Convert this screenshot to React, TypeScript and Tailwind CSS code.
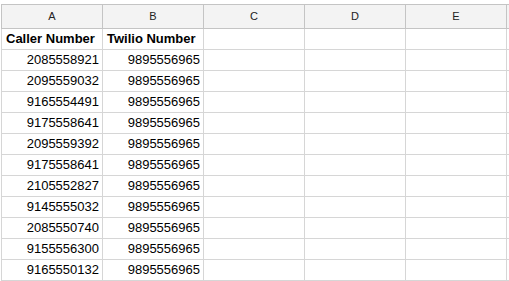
import React from "react";

const callers = [
  "2085558921",
  "2095559032",
  "9165554491",
  "9175558641",
  "2095559392",
  "9175558641",
  "2105552827",
  "9145555032",
  "2085550740",
  "9155556300",
  "9165550132",
];

const cols = ["A", "B", "C", "D", "E"];

export default function App() {
  const rows: string[][] = [
    ["Caller Number", "Twilio Number", "", "", ""],
    ...callers.map((c) => [c, "9895556965", "", "", ""]),
  ];
  return (
    <div
      className="w-[509px] h-[281px] overflow-hidden bg-white pt-[4px] pl-px"
      style={{ fontFamily: '"Liberation Sans", Arial, sans-serif' }}
    >
      <div className="flex h-[25px] border-t border-b border-l border-[#c4c4c4] bg-[#f3f3f3]">
        {cols.map((c) => (
          <div
            key={c}
            className="w-[101px] shrink-0 border-r border-[#c4c4c4] flex items-center justify-center text-[11px] text-[#222]"
          >
            {c}
          </div>
        ))}
        <div className="flex-1" />
      </div>
      {rows.map((r, i) => (
        <div key={i} className="flex h-[21px] border-b border-l border-[#d6d6d6]">
          {r.map((v, j) => (
            <div
              key={j}
              className={
                "w-[101px] shrink-0 border-r border-[#d6d6d6] flex items-center text-[13px] text-black whitespace-nowrap " +
                (i === 0 ? "font-bold pl-[4px] justify-start" : "justify-end pr-[3px]")
              }
            >
              {v}
            </div>
          ))}
          <div className="flex-1" />
        </div>
      ))}
    </div>
  );
}
